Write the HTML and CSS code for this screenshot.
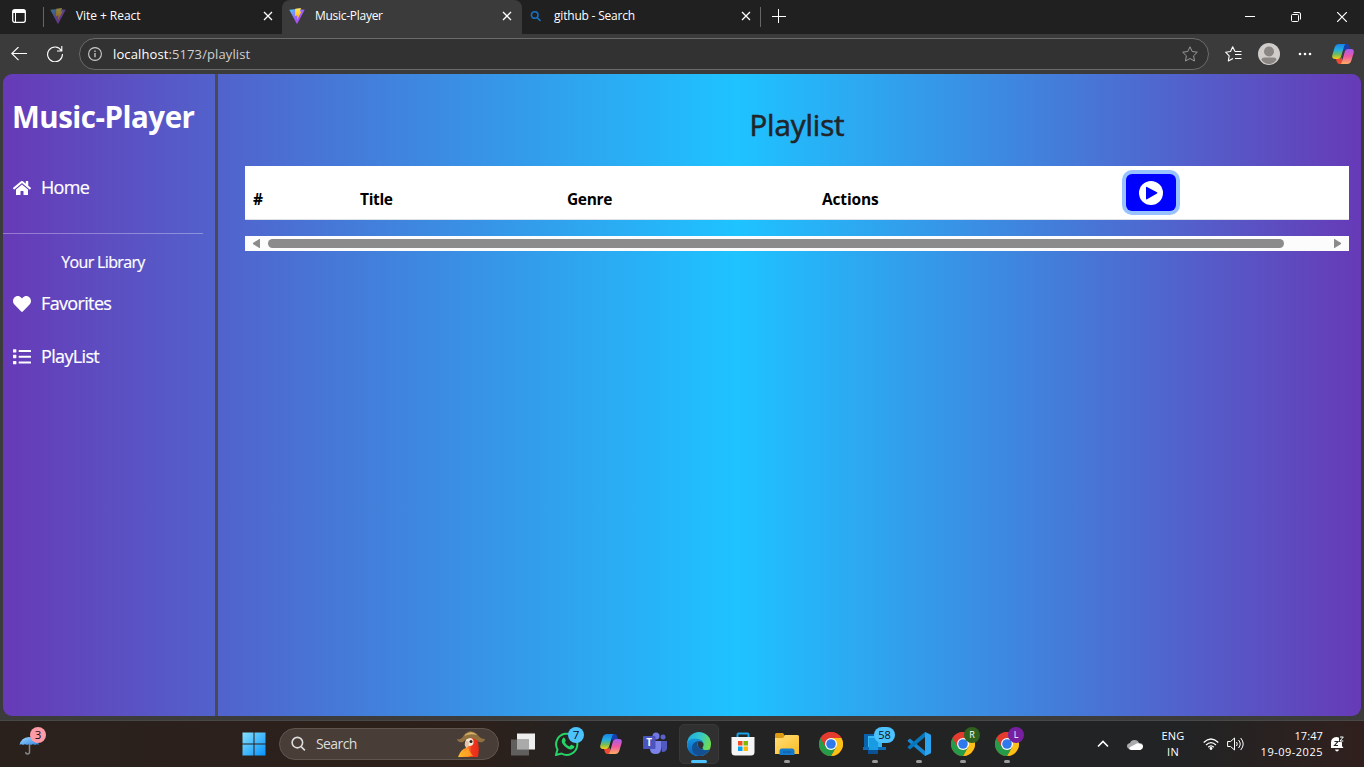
FILE: index.html
```html
<!DOCTYPE html>
<html lang="en">
<head>
<meta charset="utf-8">
<title>Music-Player</title>
<link rel="stylesheet" href="styles.css">
</head>
<body>
<svg class="defs" width="0" height="0" aria-hidden="true">
  <defs>
    <linearGradient id="viteA" x1="0" y1="0" x2="1" y2="1"><stop offset="0" stop-color="#41d1ff"/><stop offset=".5" stop-color="#9b62f5"/><stop offset="1" stop-color="#bd34fe"/></linearGradient>
    <linearGradient id="viteB" x1="0" y1="0" x2="0" y2="1"><stop offset="0" stop-color="#ffea60"/><stop offset="1" stop-color="#ffa800"/></linearGradient>
    <linearGradient id="copA" x1="0" y1="0" x2="0" y2="1"><stop offset="0" stop-color="#1684e8"/><stop offset=".4" stop-color="#25aee0"/><stop offset=".7" stop-color="#73bd58"/><stop offset="1" stop-color="#f8cd16"/></linearGradient>
    <linearGradient id="copB" x1="0" y1="0" x2="0" y2="1"><stop offset="0" stop-color="#a65cf2"/><stop offset=".5" stop-color="#ee5aa0"/><stop offset="1" stop-color="#ffad63"/></linearGradient>
    <linearGradient id="win" x1="0" y1="0" x2="1" y2="1"><stop offset="0" stop-color="#85e0ff"/><stop offset="1" stop-color="#0693fa"/></linearGradient>
    <linearGradient id="edgeA" x1="0" y1="0" x2="1" y2=".4"><stop offset="0" stop-color="#1ba7df"/><stop offset=".55" stop-color="#35c7c9"/><stop offset="1" stop-color="#6fdc50"/></linearGradient>
    <linearGradient id="edgeB" x1="0" y1="0" x2="0" y2="1"><stop offset="0" stop-color="#1593dc"/><stop offset="1" stop-color="#0b62bb"/></linearGradient>
    <linearGradient id="folder" x1="0" y1="0" x2="1" y2="1"><stop offset="0" stop-color="#ffe07a"/><stop offset="1" stop-color="#fdbb22"/></linearGradient>
    <linearGradient id="umb" x1="0" y1="0" x2="1" y2="1"><stop offset="0" stop-color="#a4dcff"/><stop offset="1" stop-color="#2d82df"/></linearGradient>
    <linearGradient id="bird" x1="0" y1="0" x2="1" y2="0"><stop offset="0" stop-color="#ffc52b"/><stop offset=".5" stop-color="#ff8128"/><stop offset=".65" stop-color="#ef3820"/><stop offset="1" stop-color="#e72b18"/></linearGradient>
    <symbol id="vite" viewBox="0 0 16 16"><path fill="url(#viteA)" d="M.3 1.8 8 .9l7.700.9L8.400 15.500q-.4.600-.8 0z"/><path fill="url(#viteB)" d="M6.300.8 12 0l-1.300 3.800 1.800-.3L8 12l.4-4.400-2.400.5z"/></symbol>
    <symbol id="close" viewBox="0 0 10 10"><path d="M1 1l8 8M9 1 1 9" fill="none" stroke="currentColor" stroke-width="1.300"/></symbol>
    <symbol id="copilot" viewBox="0 0 22 20"><path fill="#183fae" d="M10 0h4.500q2 0 2.700 2.200L18 5h-3q-1.800 0-2.400 1.800z"/><path fill="#ed4a36" d="M12 20H7.500q-2 0-2.700-2.200L4 15h3q1.800 0 2.400-1.800z"/><path fill="url(#copA)" d="M7 0h6.500q-1 .6-1.500 2.500L9.300 12Q8.500 15 6 15H3Q-.6 15 .4 11l2.200-7.500Q3.600 0 7 0z"/><path fill="url(#copB)" d="M15 20H8.500q1-.6 1.500-2.500L12.700 8Q13.500 5 16 5h3q3.600 0 2.600 4l-2.200 7.500Q18.400 20 15 20z"/></symbol>
    <symbol id="chrome" viewBox="0 0 24 24"><circle cx="12" cy="12" r="12" fill="#e33b2e"/><path fill="#fbc116" d="M22.400 6A12 12 0 0 1 12 24l5.200-9L12 6z"/><path fill="#269c49" d="M1.600 6A12 12 0 0 0 12 24l5.200-9L6.800 15z"/><path fill="#e33b2e" d="M1.600 6a12 12 0 0 1 20.800 0H12l-5.200 9z"/><circle cx="12" cy="12" r="6" fill="#fff"/><circle cx="12" cy="12" r="4.800" fill="#3079ed"/></symbol>
  </defs>
</svg>

<div class="screen">
  <header class="tabbar">
    <svg class="workspace" viewBox="0 0 14 14"><rect x=".7" y=".7" width="12.600" height="12.600" rx="2" fill="none" stroke="#fff" stroke-width="1.300"/><path d="M1 1h12v3H1z" fill="#fff"/><path d="M3.500 4v9" stroke="#fff"/></svg>
    <span class="tab-sep"></span>
    <div class="tab tab-first"><svg class="favicon faded"><use href="#vite"/></svg><span class="t-vite">Vite + React</span><svg class="tab-close"><use href="#close"/></svg></div>
    <div class="tab active"><svg class="favicon"><use href="#vite"/></svg><span class="t-music">Music-Player</span><svg class="tab-close"><use href="#close"/></svg></div>
    <div class="tab tab-last"><svg class="favicon" viewBox="0 0 16 16"><g fill="none" stroke="#1672c4" stroke-width="1.600"><circle cx="6.700" cy="7" r="3.300"/><path d="m9 9.500 3.500 3.400"/></g></svg><span class="t-git">github - Search</span><svg class="tab-close"><use href="#close"/></svg></div>
    <span class="tab-sep"></span>
    <svg class="new-tab" viewBox="0 0 14 14"><path d="M6.500 0v14M0 7.500h14" stroke="#fff"/></svg>
    <div class="window-buttons">
      <svg viewBox="0 0 10 10"><path d="M0 4.500h10" stroke="#fff"/></svg>
      <svg viewBox="0 0 10 10"><g fill="none" stroke="#fff"><rect x=".5" y="2.500" width="7" height="7" rx="1"/><path d="M2.500.5H8Q9.500.5 9.500 2v5.500"/></g></svg>
      <svg viewBox="0 0 10 10"><path d="M0 0l10 10M10 0 0 10" stroke="#fff" stroke-width="1.200"/></svg>
    </div>
  </header>

  <nav class="toolbar">
    <svg class="back" viewBox="0 0 16 14"><path d="M16 6.500H.8M7.500 0 .8 6.500l6.700 6.700" fill="none" stroke="#fff" stroke-width="1.100"/></svg>
    <svg class="reload" viewBox="0 0 16 16"><path d="M14.300 4.500A7.400 7.400 0 1 0 15.400 8M14.800 0v5H10" fill="none" stroke="#fff" stroke-width="1.100"/></svg>
    <div class="address">
      <svg class="info" viewBox="0 0 14 14"><circle cx="7" cy="7" r="6.400" fill="none" stroke="#ccc" stroke-width="1.100"/><path d="M7 6v4.300M7 3.600v1.400" stroke="#ccc" stroke-width="1.300"/></svg>
      <span class="url"><b>localhost</b>:5173/playlist</span>
      <svg class="star" viewBox="0 0 16 16"><path d="m8 .8 2.200 4.700 5.100.7-3.700 3.600.9 5.200L8 12.500 3.500 15l.9-5.200L.7 6.200l5.100-.7z" fill="none" stroke="#999" stroke-linejoin="round"/></svg>
    </div>
    <svg class="fav-list" viewBox="0 0 17 16"><path d="M10 5.500 7.700.8 5.500 5.500l-4.900.7 3.600 3.600-.9 5.200L8 12.500M10 5.500h6.500M10 8.500h6.500M10 12.500h6.500" fill="none" stroke="#fff" stroke-width="1.100" stroke-linejoin="round"/></svg>
    <svg class="profile" viewBox="0 0 22 22"><circle cx="11" cy="11" r="11" fill="#cfccc9"/><circle cx="11" cy="8.500" r="5" fill="#8a8683"/><path d="M3.500 17q0-2.500 3-2.500h9q3 0 3 2.500Q15.500 21 11 21t-7.500-4z" fill="#8a8683"/></svg>
    <svg class="more" viewBox="0 0 14 4"><g fill="#fff"><circle cx="2" cy="2" r="1.300"/><circle cx="7" cy="2" r="1.300"/><circle cx="12" cy="2" r="1.300"/></g></svg>
    <svg class="copilot"><use href="#copilot"/></svg>
  </nav>

  <div class="app">
    <aside class="sidebar">
      <h1>Music-Player</h1>
      <a class="link home"><svg viewBox="0 0 576 512"><path fill="#fff" d="M280 148 96 300v164q0 16 16 16l112-.3q16 0 16-16V368q0-16 16-16h64q16 0 16 16v96q0 16 16 16l112 .3q16 0 16-16V300L296 148q-8-6-16 0zM572 251l-84-69V44q0-12-12-12h-56q-12 0-12 12v73l-90-74q-30-24-61 0L4 251q-9 8-2 17l26 31q8 9 17 2L280 107q8-6 16 0l235 194q9 7 17-2l26-31q7-10-2-17z"/></svg><span>Home</span></a>
      <hr>
      <p class="library">Your Library</p>
      <a class="link favorites"><svg viewBox="0 0 512 512"><path fill="#fff" d="M462 62c-55-47-136-38-187 14l-19 20-20-20C186 24 104 15 50 62c-63 54-66 150-10 208l193 200q23 22 46 0l193-200c56-58 53-154-10-208z"/></svg><span>Favorites</span></a>
      <a class="link lists"><svg viewBox="0 0 512 512"><path fill="#fff" d="M16 32h64q16 0 16 16v64q0 16-16 16H16q-16 0-16-16V48q0-16 16-16zm0 160h64q16 0 16 16v64q0 16-16 16H16q-16 0-16-16v-64q0-16 16-16zm0 176h64q16 0 16 16v64q0 16-16 16H16q-16 0-16-16v-64q0-16 16-16zM176 56h320q16 0 16 16v24q0 16-16 16H176q-16 0-16-16V72q0-16 16-16zm0 164h320q16 0 16 16v24q0 16-16 16H176q-16 0-16-16v-24q0-16 16-16zm0 164h320q16 0 16 16v24q0 16-16 16H176q-16 0-16-16v-24q0-16 16-16z"/></svg><span>PlayList</span></a>
    </aside>
    <main class="content">
      <h2><span>Playlist</span></h2>
      <div class="table-head">
        <span>#</span><span>Title</span><span>Genre</span><span class="th-actions">Actions</span>
        <button class="play" aria-label="Play"><svg viewBox="0 0 24 24"><circle cx="12" cy="12" r="12" fill="#fff"/><path d="M7 6.500q0-1 1-.5l10 5.300q.8.600 0 1.200l-10 5.800q-1 .5-1-.5z" fill="#00f"/></svg></button>
      </div>
      <div class="scrollbar">
        <svg viewBox="0 0 8 9"><path d="M8 .5v8q0 1-1 .3L1.300 5.200q-.8-.7 0-1.400L7 .2q1-.7 1 .3z" fill="#8b8b8b"/></svg>
        <div class="track"><div class="thumb"></div></div>
        <svg viewBox="0 0 8 9"><path d="M0 .5v8q0 1 1 .3l5.700-3.600q.8-.7 0-1.400L1 .2Q0-.5 0 .5z" fill="#8b8b8b"/></svg>
      </div>
    </main>
  </div>

  <footer class="taskbar">
    <div class="weather"><svg viewBox="0 0 22 20"><path d="M10.500 8v9q0 2-2 2T7 17" fill="none" stroke="#888" stroke-width="1.500"/><path d="M.5 10Q2 2.500 10 2q8 .5 10 8-2-1.500-4 0-2-1.500-4 0-2-1.500-4 0-2-1.500-4 0-2-1.500-3.500 0z" fill="url(#umb)"/></svg><span class="badge pink">3</span></div>
    <div class="slot start"><svg viewBox="0 0 24 24"><path d="M.5.500h11v11H.5zM12.500.5h11v11h-11zM.5 12.500h11v11H.5zM12.500 12.500h11v11h-11z" fill="url(#win)"/></svg></div>
    <div class="search">
      <svg class="glass" viewBox="0 0 16 16"><g fill="none" stroke="#ddd" stroke-width="1.700"><circle cx="6.800" cy="6.500" r="5.600"/><path d="m10.800 10.800 4 4"/></g></svg>
      <span>Search</span>
      <svg class="parrot" viewBox="0 0 28 27"><path d="M1 26q3-8 8-9l1-8Q14 4 20 7q3 10 1 19z" fill="url(#bird)"/><path d="m2 25 9-7 5 7z" fill="#ffae24" opacity=".7"/><ellipse cx="12.500" cy="11" rx="4" ry="4" fill="#f5e8d9"/><circle cx="14" cy="10.500" r="1.500" fill="#332014"/><path d="M8 11q3-3 4 1 0 4-3 5-2-3-1-6z" fill="#dfc6ad"/><path d="M0 8q5 1 7-4 6-7 13-1 3 5 8 5-1 4-6 3Q14 3 6 11q-5 1-6-3z" fill="#92713f"/><path d="M7 5q7-7 13-1-7-2-13 1z" fill="#d8b56b"/></svg>
    </div>
    <div class="slot"><svg viewBox="0 0 24 24"><path d="M6 1.500h18v16H6z" fill="#eee"/><path d="M0 7.500h18v16H0z" fill="#686868" opacity=".88"/><path d="M6 7.500h12v10H6z" fill="#aaa"/></svg></div>
    <div class="slot"><svg viewBox="0 0 24 24"><path d="M1 23l1.500-5.500A10.600 10.600 0 1 1 6.500 21.500z" fill="none" stroke="#25d366" stroke-width="2"/><path d="M8 6q1-1 1.700.2l1 2q.3.800-.9 2 1.500 3 4.700 4.200l1.400-1.500q.5-.4 1.200 0l2 1q1 .6-.2 2.200-3 2.700-7-.2-5-3.300-5.200-6.600Q6.800 7.300 8 6z" fill="#25d366"/></svg><span class="badge blue">7</span></div>
    <div class="slot"><svg class="cop-task"><use href="#copilot"/></svg></div>
    <div class="slot"><svg viewBox="0 0 24 24"><circle cx="13" cy="4" r="3.500" fill="#7077e4"/><circle cx="20" cy="5" r="2.500" fill="#5b62cc"/><path d="M17 9h7v7q0 4-5 4z" fill="#5259bf"/><path d="M7 9h11v8q0 5-5.500 5T7 17z" fill="#7b83eb"/><rect y="4" width="12.500" height="13" rx="1" fill="#4b53bc"/><text x="6.200" y="14" class="teams-letter">T</text></svg></div>
    <div class="slot current"><svg viewBox="0 0 24 24"><circle cx="12" cy="12" r="12" fill="url(#edgeA)"/><path d="M0 12Q1 6.500 8 6.500q8 0 9 6L14 16q4 4 9 1.500Q19 24 12 24 1 24 0 12z" fill="url(#edgeB)"/><path d="M12 9q-3 3-1 6 4 5 12 2.500Q19 24 12 24q-7-2-7-8 0-6 7-7z" fill="#144f91"/><path d="M11.500 9.500q3-.8 4.500 1.500 1 3-.5 4.500-.5 1 1.500 1.700-4 .3-5.500-2.200-1.500-3 0-5.500z" fill="#303333"/></svg><i></i></div>
    <div class="slot"><svg viewBox="0 0 24 24"><path d="M6.500 6V2.500q0-1 1-1h9q1 0 1 1V6" fill="none" stroke="#19a2e8" stroke-width="2"/><path d="M.5 5h23v15q0 3.500-3.500 3.500H4Q.5 23.500.5 20z" fill="#f5f5f5"/><path d="M7 9h4.500v4.500H7z" fill="#f25022"/><path d="M12.500 9H17v4.500h-4.500z" fill="#7fba00"/><path d="M7 14.500h4.500V19H7z" fill="#00a4ef"/><path d="M12.500 14.500H17V19h-4.500z" fill="#ffb900"/></svg></div>
    <div class="slot"><svg viewBox="0 0 24 24"><path d="M0 2.500Q0 1 1.500 1H8l2 3-2 3H0z" fill="#dc9b13"/><path d="M0 6h8l2-3h12.500Q24 3 24 4.500V22H0z" fill="url(#folder)"/><path d="M4.500 23v-4q0-2.500 2.500-2.500h10q2.500 0 2.500 2.500v4z" fill="#147acb"/><path d="M8 20h8" stroke="#0c59a4"/></svg><i class="dot"></i></div>
    <div class="slot"><svg><use href="#chrome"/></svg></div>
    <div class="slot"><svg viewBox="0 0 24 24"><path d="M1 2h11v13H1z" fill="#0b62aa"/><path d="M5 4h14v14H5z" fill="#35b8f1"/><path d="M0 15h23v3H0z" fill="#0e6fb9"/><path d="M6 6h9v12H6z" fill="#189be2"/><path d="M5 18h10v4H5z" fill="#0b5295"/></svg><span class="badge blue wide">58</span><i class="dot"></i></div>
    <div class="slot"><svg viewBox="0 0 24 24"><path d="m1 8 2-1.500L18 19v5L1 9.500q-.8-.8 0-1.500z" fill="#1687d2"/><path d="m1 16 2 1.500L18 5V0L1 14.500q-.8.800 0 1.500z" fill="#0878bd"/><path d="m18 0 5 2.200q1 .4 1 1.500v16.600q0 1-1 1.500L18 24z" fill="#2ba5ef"/></svg><i class="dot"></i></div>
    <div class="slot"><svg><use href="#chrome"/></svg><span class="badge user green">R</span><i class="dot"></i></div>
    <div class="slot"><svg><use href="#chrome"/></svg><span class="badge user purple">L</span><i class="dot"></i></div>
    <div class="tray">
      <svg class="chevron" viewBox="0 0 12 8"><path d="m1 6.500 5-5 5 5" fill="none" stroke="#fff" stroke-width="1.600"/></svg>
      <svg class="cloud" viewBox="0 0 16 11"><path d="M3.500 10Q0 10 0 7q0-2.500 3-3 1-3 4.500-3T12 4q4 0 4 3t-3 3z" fill="#aaa"/><path d="M2 10q0-2 3-3l3-1.500Q11 3.500 13 5q3 .5 3 2.500T13.500 11h-9Q3 11 2 10z" fill="#fff"/></svg>
      <div class="lang"><span>ENG</span><span>IN</span></div>
      <svg class="wifi" viewBox="0 0 16 12"><g fill="none" stroke="#fff" stroke-width="1.200"><path d="M.7 4.500q7.300-7 14.600 0M3 7q5-4.800 10 0M5.200 9.200Q8 6.500 10.800 9.200"/></g><circle cx="8" cy="10.500" r="1.400" fill="#fff"/></svg>
      <svg class="volume" viewBox="0 0 17 14"><path d="M.6 4.500h3L7.500 1v12L3.600 9.500h-3zM9.500 5q1.500 2 0 4M11.500 3q3.500 4 0 8M13.700 1q5 6 0 12" fill="none" stroke="#fff" stroke-linejoin="round"/></svg>
      <div class="clock"><span class="time">17:47</span><span class="date">19-09-2025</span></div>
      <svg class="bell" viewBox="0 0 14 16"><path d="M1 12V6.500q0-5 5.500-5.500l4 1 1.500 5v3l1.500 2zM5 13.500h4q-.5 2-2 2t-2-2z" fill="#fff"/><path d="M4.500 5.500H8l-3.500 4H8" fill="none" stroke="#272120" stroke-width="1.100"/><path d="M9 0h5v6H9z" fill="#272120"/><path d="M10 1h3.300L10 5h3.300" fill="none" stroke="#fff"/></svg>
    </div>
  </footer>
</div>
</body>
</html>
```

FILE: styles.css
```css
* { box-sizing: border-box; }
body { margin: 0; font-family: "Open Sans", "Noto Sans", sans-serif; color: #fff; }
svg { display: block; flex: none; }
.defs { position: absolute; }
.screen { width: 1364px; height: 767px; display: flex; flex-direction: column; background: #3b3b3b; overflow: hidden; }

.tabbar { height: 34px; flex: none; display: flex; align-items: center; background: #202020; padding-left: 12px; font-size: 12px; line-height: 16px; }
.workspace { width: 14px; height: 14px; margin: 0 17px 2px 0; }
.tab-sep { width: 1px; height: 20px; background: #666; }
.tab { height: 34px; display: flex; align-items: center; padding-bottom: 2px; width: 240px; padding-left: 7px; padding-right: 10px; }
.tab span { margin-left: 10px; white-space: nowrap; }
.tab-first { width: 238px; padding-left: 6px; padding-right: 9px; }
.tab-last { width: 238px; padding-left: 6px; padding-right: 9px; }
.active { background: #3b3b3b; border-radius: 8px 8px 0 0; }
.favicon { width: 16px; height: 16px; }
.faded { opacity: .5; }
.tab-close { width: 10px; height: 10px; margin-left: auto; }
.new-tab { width: 14px; height: 14px; margin: 0 0 2px 11px; }
.window-buttons { display: flex; gap: 36px; margin-left: auto; padding-right: 17px; }
.window-buttons svg { width: 10px; height: 10px; }
.t-vite { letter-spacing: -.06px; }
.t-music { letter-spacing: -.28px; }
.t-git { letter-spacing: -.2px; }

.toolbar { height: 40px; flex: none; display: flex; align-items: center; padding-left: 11px; padding-right: 10px; }
.back { width: 16px; height: 14px; }
.reload { width: 16px; height: 16px; margin-left: 20px; margin-right: 16px; }
.address { width: 1130px; height: 32px; border: 1px solid #6b6b6b; border-radius: 16px; background: #323232; display: flex; align-items: center; padding: 0 10px 0 8px; }
.info { width: 14px; height: 14px; }
.url { font-size: 13px; line-height: 18px; margin-left: 11px; color: #d0d0d0; letter-spacing: .11px; }
.url b { font-weight: 400; color: #fff; }
.star { width: 16px; height: 16px; margin-left: auto; }
.fav-list { width: 17px; height: 16px; margin-left: 16px; }
.profile { width: 22px; height: 22px; margin-left: 16px; }
.more { width: 14px; height: 4px; margin-left: 18px; }
.copilot { width: 22px; height: 20px; margin-left: auto; }

.app { width: 1358px; height: 642px; margin-left: 3px; flex: none; display: flex; border-radius: 9px; overflow: hidden; background: linear-gradient(90deg, #673ab7 0, #1ec3ff 54%, #673ab7 100%); }
.sidebar { width: 215px; border-right: 3px solid #4b4b4f; }
h1 { margin: 22px 0 0 9px; font-size: 29.500px; line-height: 42px; font-weight: 700; letter-spacing: -.5px; white-space: nowrap; }
.link { display: flex; align-items: center; gap: 10px; padding-left: 10px; height: 28px; font-size: 18px; line-height: 28px; letter-spacing: -.65px; -webkit-text-stroke: .2px #fff; }
.link span { padding-bottom: 2px; }
.link svg { width: 18px; height: 18px; }
.home { margin-top: 36px; letter-spacing: -.7px; }
.sidebar hr { width: 200px; height: 1px; border: 0; background: rgba(255,255,255,.32); margin: 31px 0 0; }
.library { margin: 16px 0 0; width: 200px; font-size: 16px; line-height: 24px; text-align: center; letter-spacing: -.65px; -webkit-text-stroke: .2px #fff; }
.favorites { margin-top: 16px; }
.lists { margin-top: 25px; }

.content { flex: 1; padding: 31px 12px 0 27px; }
h2 { margin: 0; font-size: 29.500px; line-height: 40px; font-weight: 500; letter-spacing: -.1px; text-align: center; color: #212529; -webkit-text-stroke: .6px #212529; }
.table-head { margin-top: 21px; height: 54px; background: #fff; border-bottom: 1px solid #dee2e6; display: grid; grid-template-columns: 107px 207px 255px 304px 1fr; padding: 8px 8px 0; color: #000; font-size: 15.500px; line-height: 24px; font-weight: 700; letter-spacing: -.35px; }
.table-head span { padding-top: 13px; }
.table-head .th-actions { letter-spacing: -.15px; }
.play { width: 50px; height: 37px; border: 0; padding: 0; border-radius: 6px; background: #00f; box-shadow: 0 0 0 4px #98c1fe; display: grid; place-items: center; }
.play svg { width: 24px; height: 24px; }
.scrollbar { margin-top: 16px; height: 15px; background: #fcfcfc; display: flex; align-items: center; padding: 0 7px; }
.scrollbar svg { width: 8px; height: 9px; }
.track { flex: 1; padding: 0 8px; }
.thumb { width: 1016px; height: 9px; border-radius: 5px; background: #8b8b8b; }

.taskbar { height: 47px; margin-top: 4px; flex: none; border-top: 1px solid #484848; display: flex; align-items: center; background: linear-gradient(90deg, #2a211d 0, #2d201a 35%, #232323 43%, #222324 87%, #30201d 100%); }
.weather { width: 213px; height: 46px; padding: 12px 0 0 19px; position: relative; margin-right: 19px; flex: none; }
.weather svg { width: 22px; height: 24px; }
.slot { width: 44px; height: 46px; display: grid; place-items: center; position: relative; flex: none; }
.slot svg { width: 24px; height: 24px; }
.slot .cop-task { width: 22px; height: 20px; }
.current { width: 40px; height: 40px; margin: 0 2px; background: #303030; border: 1px solid #383838; border-radius: 5px; }
.slot i { position: absolute; left: 50%; bottom: 0; width: 16px; height: 3px; margin-left: -8px; border-radius: 2px; background: #4cc2ff; }
.slot .dot { width: 6px; margin-left: -3px; bottom: 4px; background: #999; }
.badge { position: absolute; left: 23px; top: 6px; width: 16px; height: 16px; border-radius: 8px; color: #111; font-size: 11.500px; line-height: 16px; text-align: center; }
.pink { left: 30px; background: #ff9aa7; }
.blue { background: #4cc2ff; }
.wide { width: 21px; left: 21px; font-size: 11px; }
.user { color: #fff; font-size: 9px; }
.green { background: #2e621e; }
.purple { background: #7620a1; }
.teams-letter { fill: #fff; font-size: 10px; font-weight: 700; text-anchor: middle; }
.search { width: 220px; height: 32px; margin: 0 2px 0 3px; border: 1px solid #61564f; border-radius: 16px; display: flex; align-items: center; padding: 0 13px 0 11px; background: #493e37; font-size: 14px; color: #ddd; }
.glass { width: 15px; height: 16px; }
.search span { margin-left: 10px; letter-spacing: -.6px; padding-bottom: 1px; }
.parrot { width: 28px; height: 27px; margin-left: auto; }
.tray { display: flex; align-items: center; margin-left: 68px; height: 46px; font-size: 11px; line-height: 16px; }
.chevron { width: 12px; height: 8px; }
.cloud { width: 16px; height: 11px; margin-left: 18px; }
.lang { width: 30px; margin-left: 15px; display: flex; flex-direction: column; align-items: center; letter-spacing: .2px; }
.wifi { width: 16px; height: 12px; margin-left: 15px; }
.volume { width: 17px; height: 14px; margin-left: 8px; }
.clock { width: 70px; margin-left: 9px; display: flex; flex-direction: column; align-items: flex-end; white-space: nowrap; }
.time { letter-spacing: .1px; }
.date { letter-spacing: .5px; }
.bell { width: 14px; height: 16px; margin-left: 7px; }
```
